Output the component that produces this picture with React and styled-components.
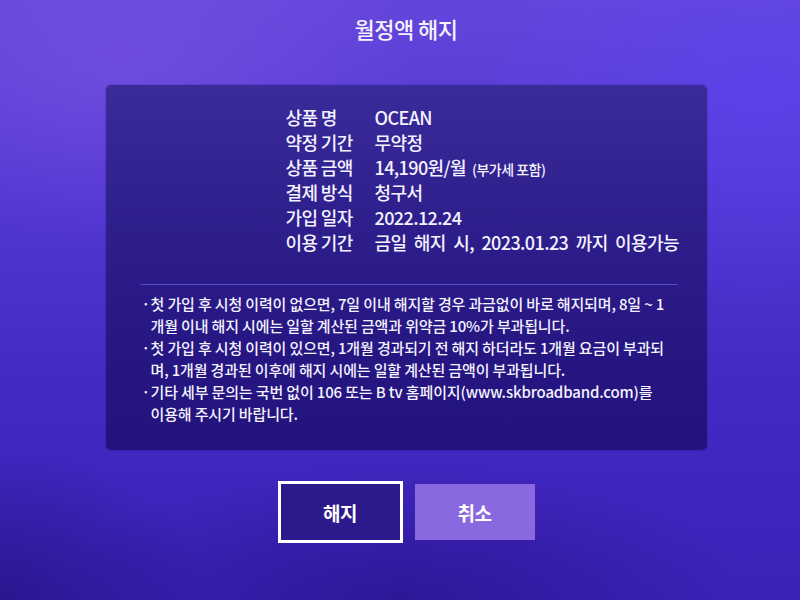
import React from "react";
import styled, { createGlobalStyle } from "styled-components";

const GlobalStyle = createGlobalStyle`
  html, body {
    margin: 0;
    padding: 0;
  }
  body {
    font-family: "Noto Sans CJK KR", "Noto Sans", sans-serif;
    color: #f4f2ff;
  }
`;

const Screen = styled.div`
  width: 800px;
  height: 600px;
  box-sizing: border-box;
  padding-left: 12px;
  display: flex;
  flex-direction: column;
  align-items: center;
  overflow: hidden;
  background:
    radial-gradient(ellipse 420px 260px at 120px 60px, rgba(130, 90, 230, 0.45), transparent 70%),
    radial-gradient(ellipse 380px 300px at 760px 90px, rgba(90, 70, 250, 0.45), transparent 70%),
    radial-gradient(ellipse 300px 220px at 0px 600px, rgba(25, 10, 100, 0.5), transparent 70%),
    radial-gradient(ellipse 500px 200px at 400px 600px, rgba(30, 10, 110, 0.45), transparent 70%),
    linear-gradient(180deg, #6445dc 0%, #5236d2 35%, #4428c4 65%, #3a22b8 100%);
`;

const Title = styled.h1`
  margin: 0;
  padding-top: 13px;
  height: 85px;
  box-sizing: border-box;
  font-size: 22px;
  font-weight: 500;
  letter-spacing: -0.5px;
  line-height: 30px;
`;

const Panel = styled.section`
  width: 601px;
  height: 365px;
  box-sizing: border-box;
  padding: 19px 29px 0 34px;
  border-radius: 5px;
  background: linear-gradient(180deg, #3a2b9a 0%, #2d1e8c 40%, #251682 75%, #22137c 100%);
  box-shadow: 0 0 2px rgba(20, 10, 80, 0.4);
`;

const InfoGrid = styled.dl`
  margin: 0 0 0 146px;
  display: grid;
  grid-template-columns: 89px auto;
  grid-auto-rows: 25px;
  align-items: center;
  font-size: 18px;
  font-weight: 500;
  letter-spacing: -0.6px;
`;

const Term = styled.dt`
  margin: 0;
  white-space: nowrap;
`;

const Value = styled.dd`
  margin: 0;
  white-space: nowrap;
  word-spacing: 4px;
`;

const Note = styled.span`
  font-size: 14px;
  margin-left: 6px;
  letter-spacing: -0.5px;
  word-spacing: 0;
`;

const Divider = styled.hr`
  margin: 30px 0 8px;
  border: none;
  height: 1px;
  background: #5a4cbe;
`;

const Notices = styled.ul`
  margin: 0;
  padding: 0;
  list-style: none;
  font-size: 15px;
  font-weight: 500;
  letter-spacing: -0.15px;
  line-height: 22px;
`;

const Notice = styled.li`
  position: relative;
  padding-left: 11px;
  white-space: nowrap;

  &::before {
    content: "·";
    position: absolute;
    left: 2px;
  }
`;

const Buttons = styled.div`
  margin-top: 31px;
  display: flex;
  align-items: center;
  gap: 12px;
`;

const Button = styled.button`
  box-sizing: border-box;
  width: ${(p) => (p.$focused ? "125px" : "120px")};
  height: ${(p) => (p.$focused ? "62px" : "56px")};
  border: ${(p) => (p.$focused ? "3px solid #ffffff" : "none")};
  background: ${(p) => (p.$focused ? "#2c1a8c" : "#8a68e0")};
  color: #ffffff;
  font-family: inherit;
  font-size: 19px;
  font-weight: 700;
  letter-spacing: -0.5px;
  padding: 0;
`;

const rows = [
  ["상품 명", "OCEAN"],
  ["약정 기간", "무약정"],
  ["상품 금액", "14,190원/월", "(부가세 포함)"],
  ["결제 방식", "청구서"],
  ["가입 일자", "2022.12.24"],
  ["이용 기간", "금일 해지 시, 2023.01.23 까지 이용가능"],
];

const notices = [
  [
    "첫 가입 후 시청 이력이 없으면, 7일 이내 해지할 경우 과금없이 바로 해지되며, 8일 ~ 1",
    "개월 이내 해지 시에는 일할 계산된 금액과 위약금 10%가 부과됩니다.",
  ],
  [
    "첫 가입 후 시청 이력이 있으면, 1개월 경과되기 전 해지 하더라도 1개월 요금이 부과되",
    "며, 1개월 경과된 이후에 해지 시에는 일할 계산된 금액이 부과됩니다.",
  ],
  [
    "기타 세부 문의는 국번 없이 106 또는 B tv 홈페이지(www.skbroadband.com)를",
    "이용해 주시기 바랍니다.",
  ],
];

export default function App() {
  return (
    <>
      <GlobalStyle />
      <Screen>
        <Title>월정액 해지</Title>
        <Panel>
          <InfoGrid>
            {rows.map(([term, value, extra]) => (
              <React.Fragment key={term}>
                <Term>{term}</Term>
                <Value>
                  {value}
                  {extra && <Note>{extra}</Note>}
                </Value>
              </React.Fragment>
            ))}
          </InfoGrid>
          <Divider />
          <Notices>
            {notices.map(([first, second]) => (
              <Notice key={first}>
                {first}
                <br />
                {second}
              </Notice>
            ))}
          </Notices>
        </Panel>
        <Buttons>
          <Button $focused>해지</Button>
          <Button>취소</Button>
        </Buttons>
      </Screen>
    </>
  );
}
